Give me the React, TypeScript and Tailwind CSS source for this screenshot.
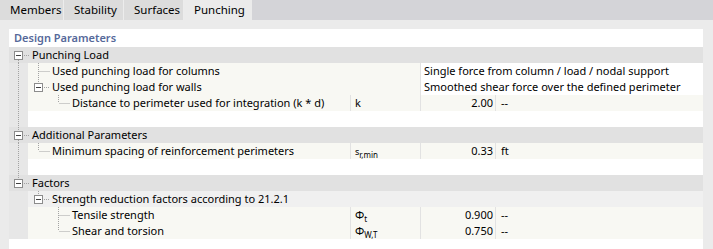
import React from "react";

type Tree = {
  level: number;
  expander?: boolean;
  first?: boolean;
  last?: boolean;
  cont: boolean[];
};

function TreeLines({ t }: { t: Tree }) {
  const stroke = "#a3a3a3";
  const els: React.ReactNode[] = [];
  t.cont.forEach((c, k) => {
    if (c)
      els.push(
        <line key={"c" + k} x1={9.5 + 20 * k} y1={0} x2={9.5 + 20 * k} y2={16} stroke={stroke} strokeDasharray="1 1" />
      );
  });
  const L = t.level;
  const cx = 9.5 + 20 * L;
  if (!t.first)
    els.push(<line key="up" x1={cx} y1={0} x2={cx} y2={t.expander ? 4 : 8} stroke={stroke} strokeDasharray="1 1" />);
  if (!t.last)
    els.push(<line key="down" x1={cx} y1={t.expander ? 13 : 8} x2={cx} y2={16} stroke={stroke} strokeDasharray="1 1" />);
  if (t.expander) {
    els.push(<rect key="box" x={5.5 + 20 * L} y={4.5} width={8} height={8} fill="#ffffff" stroke="#8c8c8c" />);
    els.push(<line key="minus" x1={7 + 20 * L} y1={8.5} x2={12 + 20 * L} y2={8.5} stroke="#404040" />);
    els.push(<line key="h" x1={15 + 20 * L} y1={8.5} x2={21 + 20 * L} y2={8.5} stroke={stroke} strokeDasharray="1 1" />);
  } else {
    els.push(<line key="h" x1={cx + 1} y1={8.5} x2={21 + 20 * L} y2={8.5} stroke={stroke} strokeDasharray="1 1" />);
  }
  return (
    <svg className="absolute left-0 top-0 pointer-events-none" width={80} height={16} viewBox="0 0 80 16">
      {els}
    </svg>
  );
}

function Gutter() {
  return <div className="w-[19px] shrink-0 bg-[#e7e7e7]" />;
}

function GroupRow({ label, t }: { label: string; t: Tree }) {
  return (
    <div className="relative flex h-4 bg-[#e1e1e1]">
      <div className="pl-[23px] leading-4">{label}</div>
      <TreeLines t={t} />
    </div>
  );
}

function WideRow({ label, value, t }: { label: string; value: string; t: Tree }) {
  return (
    <div className="relative flex h-4">
      <Gutter />
      <div className="w-[392px] shrink-0 bg-[#f8f8f3] leading-4" style={{ paddingLeft: 20 * t.level + 4 }}>
        {label}
      </div>
      <div className="flex-1 bg-white border-l border-[#e2e2e2] pl-[3px] leading-4 whitespace-nowrap">{value}</div>
      <TreeLines t={t} />
    </div>
  );
}

function DataRow({
  label,
  symbol,
  value,
  unit,
  t,
}: {
  label: string;
  symbol: React.ReactNode;
  value: string;
  unit: string;
  t: Tree;
}) {
  return (
    <div className="relative flex h-4">
      <Gutter />
      <div className="flex flex-1 bg-[#f8f8f3] leading-4">
        <div className="w-[322px] shrink-0 whitespace-nowrap" style={{ paddingLeft: 20 * t.level + 4 }}>
          {label}
        </div>
        <div className="w-[70px] shrink-0 border-l border-[#e2e2e2] pl-[4px] whitespace-nowrap">{symbol}</div>
        <div className="w-[75px] shrink-0 border-l border-[#e2e2e2] pr-[2px] text-right">{value}</div>
        <div className="flex-1 border-l border-[#e2e2e2] pl-[5px]">{unit}</div>
      </div>
      <TreeLines t={t} />
    </div>
  );
}

function SubGroupRow({ label, t }: { label: string; t: Tree }) {
  return (
    <div className="relative flex h-4">
      <Gutter />
      <div className="flex-1 bg-[#f0f0f0] leading-4" style={{ paddingLeft: 20 * t.level + 4 }}>
        {label}
      </div>
      <TreeLines t={t} />
    </div>
  );
}

function BlankRow({ cont }: { cont: boolean }) {
  return (
    <div className="relative flex h-4">
      <Gutter />
      <div className="flex-1 bg-white" />
      {cont && (
        <svg className="absolute left-0 top-0 pointer-events-none" width={20} height={16}>
          <line x1={9.5} y1={0} x2={9.5} y2={16} stroke="#a3a3a3" strokeDasharray="1 1" />
        </svg>
      )}
    </div>
  );
}

export default function App() {
  const tabs = [
    { name: "Members", w: "w-[64px]" },
    { name: "Stability", w: "w-[60px]" },
    { name: "Surfaces", w: "w-[60px]" },
  ];
  return (
    <div
      className="w-[713px] h-[249px] overflow-hidden bg-[#ebebeb] text-[11px] text-black flex flex-col"
      style={{ fontFamily: '"Noto Sans", "Open Sans", sans-serif' }}
    >
      <div className="flex h-5 shrink-0 bg-[#d4d4d8] text-[11.5px]">
        {tabs.map((tb) => (
          <div key={tb.name} className={`${tb.w} h-5 shrink-0 bg-[#dcdcdc] border-r border-[#ececec] pl-[10px] leading-5 whitespace-nowrap`}>
            {tb.name}
          </div>
        ))}
        <div className="w-[68px] h-5 shrink-0 bg-[#ebebeb] pl-[10px] leading-5 whitespace-nowrap">Punching</div>
      </div>
      <div className="flex-1 pt-[9px] pl-[9px] pr-[10px] flex flex-col">
        <div className="flex-1 bg-white flex flex-col">
          <div className="h-[18px] pl-[5px] leading-[18px] font-semibold text-[#56699a]">Design Parameters</div>
          <GroupRow label="Punching Load" t={{ level: 0, expander: true, first: true, cont: [] }} />
          <WideRow
            label="Used punching load for columns"
            value="Single force from column / load / nodal support"
            t={{ level: 1, cont: [true] }}
          />
          <WideRow
            label="Used punching load for walls"
            value="Smoothed shear force over the defined perimeter"
            t={{ level: 1, expander: true, last: true, cont: [true] }}
          />
          <DataRow
            label="Distance to perimeter used for integration (k * d)"
            symbol="k"
            value="2.00"
            unit="--"
            t={{ level: 2, last: true, cont: [true, false] }}
          />
          <BlankRow cont={true} />
          <GroupRow label="Additional Parameters" t={{ level: 0, expander: true, cont: [] }} />
          <DataRow
            label="Minimum spacing of reinforcement perimeters"
            symbol={
              <span className="text-[9px]">
                s<sub className="text-[8px] align-[-1px]">r,min</sub>
              </span>
            }
            value="0.33"
            unit="ft"
            t={{ level: 1, last: true, cont: [true] }}
          />
          <BlankRow cont={true} />
          <GroupRow label="Factors" t={{ level: 0, expander: true, last: true, cont: [] }} />
          <SubGroupRow
            label="Strength reduction factors according to 21.2.1"
            t={{ level: 1, expander: true, last: true, cont: [false] }}
          />
          <DataRow
            label="Tensile strength"
            symbol={
              <span>
                Φ<sub className="text-[8px] align-[-1px]">t</sub>
              </span>
            }
            value="0.900"
            unit="--"
            t={{ level: 2, cont: [false, false] }}
          />
          <DataRow
            label="Shear and torsion"
            symbol={
              <span>
                Φ<sub className="text-[8px] align-[-1px]">W,T</sub>
              </span>
            }
            value="0.750"
            unit="--"
            t={{ level: 2, last: true, cont: [false, false] }}
          />
        </div>
      </div>
    </div>
  );
}
